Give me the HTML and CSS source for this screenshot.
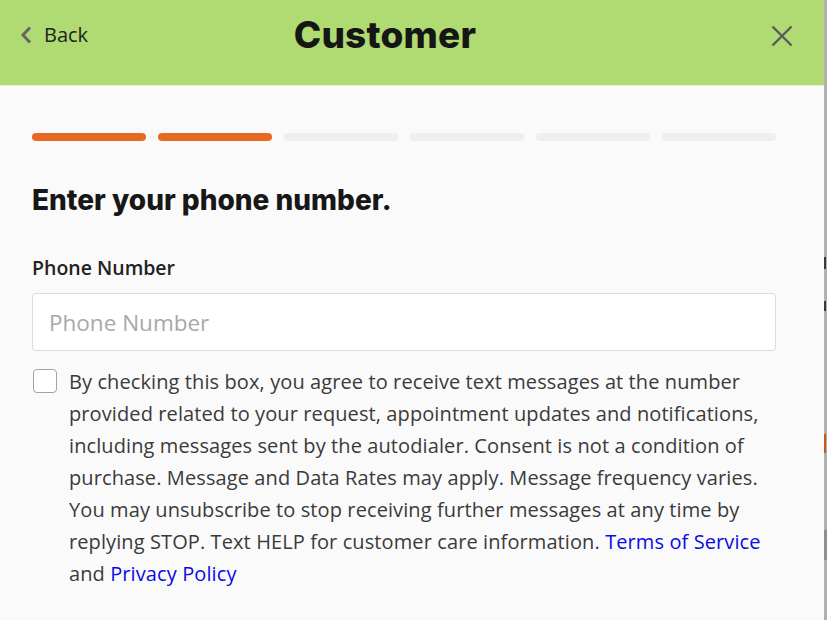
FILE: index.html
```html
<!DOCTYPE html>
<html lang="en">
<head>
<meta charset="utf-8">
<title>Customer</title>
<link rel="stylesheet" href="styles.css">
</head>
<body>
<div class="page">
  <div class="modal">
    <header class="header">
      <a class="back" href="#">
        <svg class="chev" width="12" height="18" viewBox="0 0 12 18"><path d="M10 1.5 L3 9 L10 16.5" fill="none" stroke="#666" stroke-width="3"/></svg>
        <span>Back</span>
      </a>
      <h1 class="title">Customer</h1>
      <button class="close" aria-label="Close">
        <svg width="22" height="22" viewBox="0 0 22 22"><path d="M1.5 1.5 L20.5 20.5 M20.5 1.5 L1.5 20.5" stroke="#5a5a5a" stroke-width="2.4"/></svg>
      </button>
    </header>
    <main class="content">
      <div class="progress">
        <span class="seg done"></span>
        <span class="seg done"></span>
        <span class="seg"></span>
        <span class="seg"></span>
        <span class="seg"></span>
        <span class="seg"></span>
      </div>
      <h2 class="heading">Enter your phone number.</h2>
      <label class="label" for="phone">Phone Number</label>
      <input class="input" id="phone" type="text" placeholder="Phone Number">
      <div class="consent">
        <span class="box"></span>
        <p class="consent-text">By checking this box, you agree to receive text messages at the number provided related to your request, appointment updates and notifications, including messages sent by the autodialer. Consent is not a condition of purchase. Message and Data Rates may apply. Message frequency varies. You may unsubscribe to stop receiving further messages at any time by replying STOP. Text HELP for customer care information. <a href="#">Terms of Service</a> and <a href="#">Privacy Policy</a></p>
      </div>
    </main>
  </div>
  <div class="behind">
    <span class="mark m1"></span>
    <span class="mark m2"></span>
    <span class="mark m3"></span>
    <span class="mark m4"></span>
  </div>
</div>
</body>
</html>
```
FILE: styles.css
```css
* { box-sizing: border-box; }
html, body { margin: 0; padding: 0; height: 100%; }
body { font-family: "Open Sans", "Noto Sans", sans-serif; background: #fafafa; overflow: hidden; }
.page { display: flex; height: 620px; }
.modal { width: 824px; background: #fafafa; display: flex; flex-direction: column; }
.behind { width: 3px; background: #b1b1b1; position: relative; }
.mark { position: absolute; left: 0; width: 2px; }
.m1 { top: 257px; height: 12px; background: #3a3a3a; }
.m2 { top: 301px; height: 10px; background: #3a3a3a; }
.m3 { top: 434px; height: 19px; background: #c8561c; }
.m4 { top: 530px; height: 30px; width: 3px; background: #8f8f8f; }
.header {
  height: 86px; background: #afdb72; border-bottom: 1px solid #e6eedd;
  display: flex; align-items: center; justify-content: space-between;
  padding: 0 31px 16px 20px; position: relative;
}
.back { display: flex; align-items: center; gap: 12px; color: #222; text-decoration: none; font-size: 20px; }
.chev { display: block; }
.title {
  margin: 0; position: absolute; left: 0; right: 0; text-align: center; pointer-events: none;
  font-family: "Inter", sans-serif; font-weight: 800; font-size: 37px; letter-spacing: 0.2px;
  color: #161616; top: 12px; padding-right: 54px;
}
.close { background: none; border: 0; padding: 0; display: flex; margin-top: 2px; }
.content { padding: 47px 48px 0 32px; }
.progress { display: flex; gap: 12px; }
.seg { flex: 1; height: 8px; border-radius: 4px; background: #efefef; }
.seg.done { background: #e86a22; }
.heading { margin: 42px 0 0; font-family: "Inter", sans-serif; font-size: 28px; font-weight: 800; color: #171717; letter-spacing: 0; }
.label { display: block; margin-top: 37px; font-size: 19.5px; font-weight: 600; color: #222; }
.input {
  display: block; width: 100%; height: 58px; margin-top: 12px;
  border: 1px solid #dcdcdc; border-radius: 4px; background: #fff;
  padding: 0 16px; font-family: inherit; font-size: 22.5px; color: #333;
}
.input::placeholder { color: #a8a8a8; }
.consent { display: flex; gap: 12px; margin-top: 17px; align-items: flex-start; }
.box { flex: none; width: 24px; height: 24px; border: 1px solid #a3a3a3; border-radius: 4px; background: #fff; margin: 1px 0 0 1px; }
.consent-text { margin: -2px 0 0; font-size: 20px; letter-spacing: 0.1px; line-height: 32px; color: #3b3b3b; }
.consent-text a { color: #0a0ae6; text-decoration: none; }
```
